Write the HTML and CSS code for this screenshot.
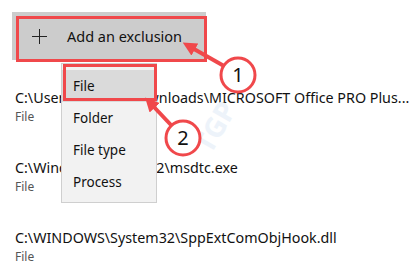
FILE: index.html
```html
<!DOCTYPE html>
<html lang="en">
<head>
    <meta charset="UTF-8">
    <title>Exclusions</title>
    <link rel="stylesheet" href="styles.css">
</head>
<body>
    <div class="page">
        <div class="toolbar">
            <button type="button" class="add-btn">
                <span class="plus"></span>
                <span>Add an exclusion</span>
            </button>
        </div>

        <div class="list">
            <div class="item">
                <div class="path">C:\Users\Sambit\Downloads\MICROSOFT Office PRO Plus...</div>
                <div class="kind">File</div>
            </div>
            <div class="item">
                <div class="path">C:\Windows\System32\msdtc.exe</div>
                <div class="kind">File</div>
            </div>
            <div class="item">
                <div class="path">C:\WINDOWS\System32\SppExtComObjHook.dll</div>
                <div class="kind">File</div>
            </div>
        </div>

        <div class="menu">
            <div class="menu-item active">File</div>
            <div class="menu-item">Folder</div>
            <div class="menu-item">File type</div>
            <div class="menu-item">Process</div>
        </div>

        <svg class="marks" width="416" height="272" viewBox="0 0 416 272">
            <defs>
                <marker id="head" markerUnits="userSpaceOnUse" markerWidth="14" markerHeight="14" refX="1" refY="7" orient="auto">
                    <path d="M0,0 L14,7 L0,14 z" fill="#f0484b"/>
                </marker>
            </defs>
            <text class="wm" x="0" y="0" transform="translate(224 132) rotate(-60)" text-anchor="middle">TGP</text>
            <rect class="box" x="17.5" y="17.5" width="188" height="43"/>
            <rect class="box" x="64.5" y="65.5" width="91" height="34"/>
            <line class="arrow" x1="224" y1="66" x2="194" y2="49" marker-end="url(#head)"/>
            <line class="arrow" x1="171" y1="125" x2="154" y2="107" marker-end="url(#head)"/>
            <circle class="dot" cx="238" cy="75" r="17"/>
            <text class="num" x="238" y="82" text-anchor="middle">1</text>
            <circle class="dot" cx="183" cy="138" r="17"/>
            <text class="num" x="183" y="145" text-anchor="middle">2</text>
        </svg>
    </div>
</body>
</html>
```

FILE: styles.css
```css
body {
    margin: 0;
    background: #fff;
    font-family: "Noto Sans", "Open Sans", sans-serif;
    color: #111;
}

.page {
    position: relative;
    width: 416px;
    height: 272px;
    overflow: hidden;
}

.toolbar {
    padding: 12px 0 0 12px;
}

.add-btn {
    display: flex;
    align-items: center;
    width: 194px;
    height: 48px;
    padding: 0 0 0 20px;
    border: 0;
    background: #cccccc;
    font-family: inherit;
    font-size: 14.5px;
    color: #111;
}

.plus {
    position: relative;
    width: 15px;
    height: 15px;
    margin-right: 20px;
}

.plus::before,
.plus::after {
    content: "";
    position: absolute;
    background: #222;
}

.plus::before { left: 7px; top: 0; width: 1px; height: 15px; }
.plus::after { left: 0; top: 7px; width: 15px; height: 1px; }

.list {
    margin-top: 28px;
    padding-left: 15px;
}

.item {
    height: 38px;
    margin-bottom: 32px;
}

.path {
    font-size: 14.3px;
    line-height: 20px;
    white-space: nowrap;
}

.kind {
    font-size: 12px;
    line-height: 18px;
    color: #555;
}

.menu {
    position: absolute;
    left: 61px;
    top: 63px;
    width: 94px;
    padding: 6px 0 4px;
    background: #f2f2f2;
    border: 1px solid #cfcfcf;
}

.menu-item {
    height: 32px;
    line-height: 32px;
    padding-left: 11px;
    font-size: 13.5px;
}

.menu-item.active {
    background: #dadada;
}

.marks {
    position: absolute;
    left: 0;
    top: 0;
}

.box {
    fill: none;
    stroke: #f0484b;
    stroke-width: 3;
}

.arrow {
    stroke: #f0484b;
    stroke-width: 4;
}

.dot {
    fill: #fff;
    stroke: #f0484b;
    stroke-width: 3;
}

.num {
    font-family: "Noto Sans", sans-serif;
    font-size: 20px;
    fill: #111;
}

.wm {
    font-family: "Noto Sans", sans-serif;
    font-weight: bold;
    font-size: 28px;
    fill: #edf3fa;
}
```
